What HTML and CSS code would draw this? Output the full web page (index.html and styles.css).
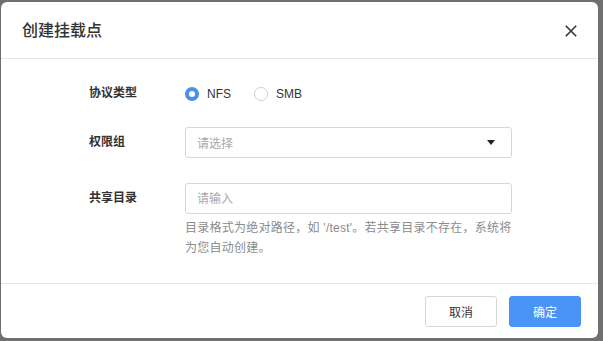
FILE: index.html
```html
<!DOCTYPE html>
<html lang="zh-CN">
<head>
<meta charset="utf-8">
<title>创建挂载点</title>
<link rel="stylesheet" href="styles.css">
</head>
<body>
<div class="dialog">
  <div class="dialog-header">
    <span class="dialog-title">创建挂载点</span>
    <span class="close-btn" aria-label="关闭">
      <svg width="12" height="12" viewBox="0 0 12 12"><path d="M0.8 0.8L11.2 11.2M11.2 0.8L0.8 11.2" stroke="#333" stroke-width="1.6" fill="none"/></svg>
    </span>
  </div>
  <div class="dialog-body">
    <div class="form-item">
      <div class="form-label">协议类型</div>
      <div class="form-control radio-group">
        <label class="radio"><span class="radio-dot checked"></span><span class="radio-text">NFS</span></label>
        <label class="radio"><span class="radio-dot"></span><span class="radio-text">SMB</span></label>
      </div>
    </div>
    <div class="form-item gap-select">
      <div class="form-label">权限组</div>
      <div class="form-control">
        <div class="select">
          <span class="placeholder">请选择</span>
          <span class="caret"></span>
        </div>
      </div>
    </div>
    <div class="form-item gap-input">
      <div class="form-label">共享目录</div>
      <div class="form-control">
        <input class="input" type="text" placeholder="请输入">
        <div class="help">目录格式为绝对路径，如 '/test'。若共享目录不存在，系统将为您自动创建。</div>
      </div>
    </div>
  </div>
  <div class="dialog-footer">
    <button class="btn btn-default">取消</button>
    <button class="btn btn-primary">确定</button>
  </div>
</div>
</body>
</html>
```
FILE: styles.css
```css
* { box-sizing: border-box; }
html, body { margin: 0; }
body {
  width: 603px;
  height: 341px;
  padding: 2px 5px 3px 1px;
  background: #6f6f6f;
  font-family: "Liberation Sans", "Noto Sans CJK SC", sans-serif;
  color: #333;
  overflow: hidden;
}
.dialog {
  height: 336px;
  background: #fff;
  border-radius: 6px;
  display: flex;
  flex-direction: column;
  overflow: hidden;
}
.dialog-header {
  height: 57px;
  flex: none;
  border-bottom: 1px solid #e6e6e6;
  padding: 0 21px 0 21px;
  display: flex;
  align-items: center;
  justify-content: space-between;
}
.dialog-title {
  font-size: 16px;
  font-weight: 500;
  color: #333;
  line-height: 24px;
  padding-top: 1px;
}
.close-btn {
  display: flex;
  width: 12px;
  height: 12px;
  margin-top: 1px;
}
.dialog-body {
  flex: 1;
  padding: 19px 0 0 88px;
}
.form-item {
  display: flex;
  align-items: flex-start;
}
.gap-select { margin-top: 18px; }
.gap-input { margin-top: 25px; }
.form-label {
  width: 96px;
  flex: none;
  font-size: 12px;
  font-weight: 700;
  line-height: 31px;
  color: #333;
}
.form-control {
  width: 327px;
}
.radio-group {
  display: flex;
  align-items: center;
  height: 31px;
  gap: 23px;
}
.radio {
  display: flex;
  align-items: center;
  gap: 8px;
  font-size: 12px;
  color: #333;
}
.radio-dot {
  width: 14px;
  height: 14px;
  border-radius: 50%;
  border: 1px solid #cfcfcf;
  background: #fff;
}
.radio-dot.checked {
  border: 4px solid #4a90e6;
}
.radio-text { line-height: 14px; }
.select {
  height: 31px;
  border: 1px solid #d6d6d6;
  border-radius: 3px;
  display: flex;
  align-items: center;
  justify-content: space-between;
  padding: 0 16px 0 11px;
}
.placeholder {
  font-size: 12px;
  color: #a8a8a8;
}
.caret {
  width: 0;
  height: 0;
  border-left: 4.5px solid transparent;
  border-right: 4.5px solid transparent;
  border-top: 5px solid #222;
}
.input {
  display: block;
  width: 100%;
  height: 31px;
  border: 1px solid #d6d6d6;
  border-radius: 3px;
  padding: 0 11px;
  font-family: inherit;
  font-size: 12px;
  color: #333;
  outline: none;
}
.input::placeholder { color: #a8a8a8; }
.help {
  margin-top: 4px;
  font-size: 12px;
  line-height: 20px;
  letter-spacing: 0.25px;
  color: #8c8c8c;
}
.dialog-footer {
  height: 55px;
  flex: none;
  border-top: 1px solid #e6e6e6;
  display: flex;
  justify-content: flex-end;
  align-items: flex-start;
  gap: 12px;
  padding: 12px 17px 0 0;
}
.btn {
  width: 72px;
  height: 31px;
  border-radius: 3px;
  font-family: inherit;
  font-size: 12px;
  cursor: pointer;
}
.btn-default {
  background: #fff;
  border: 1px solid #d6d6d6;
  color: #333;
}
.btn-primary {
  background: #4a94f5;
  border: 1px solid #4a94f5;
  color: #fff;
}
```
